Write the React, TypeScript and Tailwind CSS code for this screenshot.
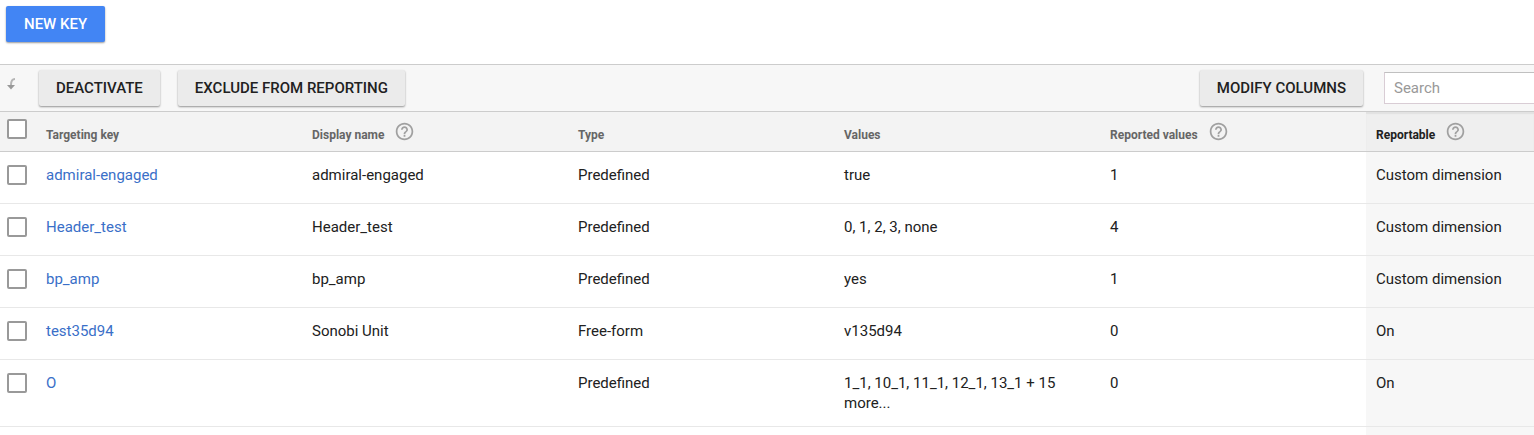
import { useState } from "react";
import { MdHelpOutline } from "react-icons/md";
import clsx from "clsx";

type Key = {
  name: string;
  displayName: string;
  type: string;
  values: string;
  reported: number;
  reportable: string;
};

const keys: Key[] = [
  { name: "admiral-engaged", displayName: "admiral-engaged", type: "Predefined", values: "true", reported: 1, reportable: "Custom dimension" },
  { name: "Header_test", displayName: "Header_test", type: "Predefined", values: "0, 1, 2, 3, none", reported: 4, reportable: "Custom dimension" },
  { name: "bp_amp", displayName: "bp_amp", type: "Predefined", values: "yes", reported: 1, reportable: "Custom dimension" },
  { name: "test35d94", displayName: "Sonobi Unit", type: "Free-form", values: "v135d94", reported: 0, reportable: "On" },
  { name: "O", displayName: "", type: "Predefined", values: "1_1, 10_1, 11_1, 12_1, 13_1 + 15 more...", reported: 0, reportable: "On" },
];

// columns definition
const columns = [
  { header: "Targeting key", help: false },
  { header: "Display name", help: true },
  { header: "Type", help: false },
  { header: "Values", help: false },
  { header: "Reported values", help: true },
  { header: "Reportable", help: true },
];

const cell = "px-[10px] py-[13px] align-top";

const Checkbox = ({ label, checked, onChange }: { label: string; checked: boolean; onChange: () => void }) => (
  <input
    type="checkbox"
    aria-label={label}
    checked={checked}
    onChange={onChange}
    className="block size-5 appearance-none rounded-[2px] border-2 border-[#999] bg-white checked:border-[#4285f4] checked:bg-[#4285f4]"
  />
);

const ToolbarButton = ({ children }: { children: string }) => (
  <button className="h-9 shrink-0 rounded-[2px] bg-[#ebebeb] px-[17px] text-[15px] font-medium whitespace-nowrap text-[#212121] shadow-[0_1px_2px_rgba(0,0,0,0.4)]">
    {children}
  </button>
);

export default function App() {
  const [selected, setSelected] = useState<string[]>([]);
  const [search, setSearch] = useState("");

  const toggle = (name: string) =>
    setSelected(selected.includes(name) ? selected.filter((n) => n !== name) : [...selected, name]);

  const allSelected = selected.length === keys.length;

  return (
    <div className="overflow-hidden bg-white font-[Roboto,sans-serif] text-[15px] leading-5 text-[#212121]">
      <div className="px-[6px] pt-[6px] pb-[22px]">
        <button className="block h-9 rounded-[2px] bg-[#4285f4] px-[18px] text-[15px] font-medium text-white shadow-[0_1px_2px_rgba(0,0,0,0.4)]">
          NEW KEY
        </button>
      </div>

      <div className="flex h-12 items-center border-y border-[#ccc] bg-[#f7f7f7]">
        {/* arrow pointing from the toolbar to the checkboxes */}
        <svg className="mr-[21px] mb-2 ml-[6px] h-3 w-3 shrink-0" viewBox="0 0 12 12" fill="none">
          <path d="M9 1C6.2 1 5 2.6 5 7" stroke="#b5b5b5" strokeWidth="2" />
          <path d="M1 7h8L5 11.5z" fill="#999" />
        </svg>
        <div className="flex gap-[18px]">
          <ToolbarButton>DEACTIVATE</ToolbarButton>
          <ToolbarButton>EXCLUDE FROM REPORTING</ToolbarButton>
        </div>
        <div className="ml-auto flex items-center gap-[21px]">
          <ToolbarButton>MODIFY COLUMNS</ToolbarButton>
          <input
            type="text"
            aria-label="Search"
            placeholder="Search"
            value={search}
            onChange={(e) => setSearch(e.target.value)}
            className="h-8 w-[150px] border border-r-0 border-[#d9cdd5] border-t-[#c0c0c0] bg-white px-[9px] outline-none placeholder:text-[#999]"
          />
        </div>
      </div>

      <table className="w-full table-fixed border-separate border-spacing-0 text-left">
        <colgroup>
          <col className="w-9" />
          <col className="w-[266px]" />
          <col className="w-[266px]" />
          <col className="w-[266px]" />
          <col className="w-[266px]" />
          <col className="w-[266px]" />
          <col />
        </colgroup>
        <thead>
          <tr className="h-10 bg-[#f3f3f3] text-xs text-[#666]">
            <th className="border-b border-[#ccc] pt-[7px] pl-[7px] align-top">
              <Checkbox
                label="Select all keys"
                checked={allSelected}
                onChange={() => setSelected(allSelected ? [] : keys.map((k) => k.name))}
              />
            </th>
            {columns.map(({ header, help }) => (
              <th
                key={header}
                className={clsx(
                  "border-b border-[#ccc] px-[10px] pt-[9px] align-top font-bold",
                  header === "Reportable" && "bg-[#efefef] text-[#212121] shadow-[inset_0_2px_1px_#e2e2e2]"
                )}
              >
                <div className="flex items-start gap-[10px]">
                  <span className="pt-[6px]">{header}</span>
                  {help && <MdHelpOutline className="size-[21px] text-[#a0a0a0]" />}
                </div>
              </th>
            ))}
          </tr>
        </thead>
        <tbody>
          {keys.map((k) => (
            <tr key={k.name} className="h-[52px] *:border-b *:border-[#e8e8e8]">
              <td className="py-[13px] pl-[7px] align-top">
                <Checkbox label={`Select ${k.name}`} checked={selected.includes(k.name)} onChange={() => toggle(k.name)} />
              </td>
              <td className={cell}>
                <a href="#" className="text-[#3a6fc8]">{k.name}</a>
              </td>
              <td className={cell}>{k.displayName}</td>
              <td className={cell}>{k.type}</td>
              <td className={cell}>{k.values}</td>
              <td className={cell}>{k.reported}</td>
              <td className={clsx(cell, "bg-[#f7f7f7]")}>{k.reportable}</td>
            </tr>
          ))}
          <tr className="h-2">
            <td colSpan={6} />
            <td className="bg-[#f7f7f7]" />
          </tr>
        </tbody>
      </table>
    </div>
  );
}
